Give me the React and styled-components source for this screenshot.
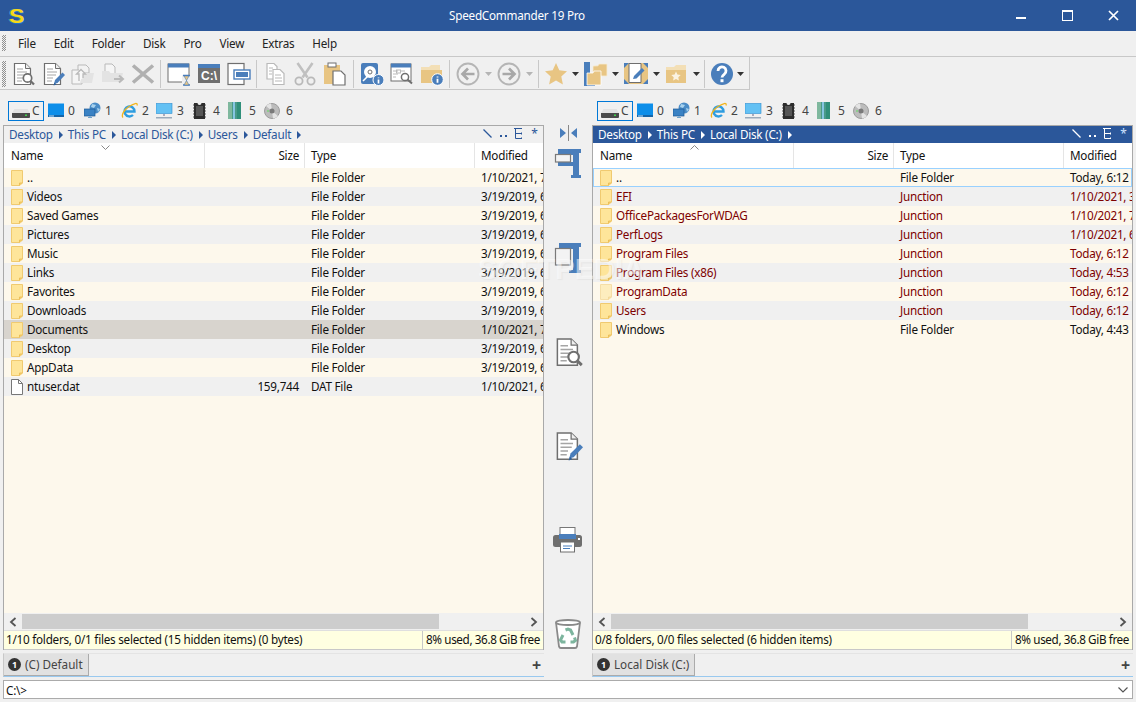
import React from "react";
import styled, { createGlobalStyle } from "styled-components";

const Global = createGlobalStyle`
  html, body { margin: 0; padding: 0; background: #f0f0f0; }
  body { font-family: "Noto Sans", "Open Sans", sans-serif; font-size: 11.7px; letter-spacing: -0.24px; color: #111; overflow: hidden; }
  * { box-sizing: border-box; }
`;

const Window = styled.div`
  width: 1136px; height: 702px; display: flex; flex-direction: column; background: #f0f0f0; position: relative; overflow: hidden;
`;
const TitleBar = styled.div`
  height: 31px; flex: none; background: #2b579a; color: #fff; display: flex; align-items: center; position: relative;
`;
const AppLogo = styled.span`
  font-family: "Liberation Sans", sans-serif; font-weight: 700; font-size: 21px; color: #f7d917; margin-left: 9px; line-height: 24px;
  transform: scaleX(1.1); transform-origin: left center;
  text-shadow: 1px 1px 0 #1b73c9, -1px 0 0 #4a94d8;
`;
const TitleText = styled.span`
  position: absolute; left: 0; width: 1034px; text-align: center; top: 7px; line-height: 17px;
`;
const WinControls = styled.div`
  margin-left: auto; display: flex;
`;
const WinBtn = styled.div`
  width: 46px; height: 31px; display: flex; align-items: center; justify-content: center;
`;
const Grip = styled.div`
  width: 4px; margin: 0 0 0 2px; flex: none; height: ${p => p.$h}px;
  background: repeating-conic-gradient(#8f8f8f 0 25%, transparent 0 50%) 0 0 / 2px 2px;
`;
const MenuBar = styled.div`
  height: 26px; flex: none; display: flex; align-items: center; border-bottom: 1px solid #c8c8c8; padding: 3px 0 4px;
`;
const MenuItem = styled.span`
  margin-left: ${p => p.$ml}px; color: #222;
`;
const ToolbarRow = styled.div`
  height: 33px; flex: none; display: flex; width: 750px; border: 1px solid #c8c8c8; border-width: 0 1px 1px 0; align-items: center; padding: 4px 0 2px;
`;
const Tools = styled.div`
  display: flex; align-items: center; margin-left: 1.5px; height: 28px;
`;
const ToolBtn = styled.div`
  width: ${p => p.$w}px; height: 28px; display: flex; align-items: center; justify-content: center; flex: none;
`;
const ToolSep = styled.div`
  width: ${p => p.$w}px; height: 28px; flex: none; display: flex; justify-content: center;
  &::after { content: ""; width: 1px; height: 100%; background: #c8c8c8; }
`;
const Main = styled.div`
  flex: 1; display: flex; padding: 0 3px; min-height: 0;
`;
const Pane = styled.div`
  width: 541px; flex: none; display: flex; flex-direction: column;
`;
const DriveBar = styled.div`
  height: 35px; flex: none; display: flex; align-items: center; padding: 6px 0 0 5px;
`;
const DriveItem = styled.div`
  display: flex; align-items: center; height: 20px; width: ${p => p.$w}px; flex: none;
  ${p => p.$active && "border: 1px solid #0078d7; padding-left: 3px; margin-right: 2px;"}
  ${p => !p.$active && "padding-left: 2px;"}
  span { color: #444; font-size: 12px; margin-left: ${p => p.$gap ?? 4}px; }
`;
const Frame = styled.div`
  width: 541px; height: 525px; flex: none; border: 1px solid #a9a9a9; border-bottom: 0; display: flex; flex-direction: column; background: #fff;
`;
const PathBar = styled.div`
  height: 17px; flex: none; display: flex; align-items: center; padding: 0 0 2px 5px;
  background: ${p => p.$active ? "#2b579a" : "#f0f0f0"};
  color: ${p => p.$active ? "#fff" : "#2b579a"};
`;
const Crumb = styled.span`
  display: flex; align-items: center; margin-right: 5px;
  &::after { content: ""; border-left: 4px solid currentColor; border-top: 4px solid transparent; border-bottom: 4px solid transparent; margin-left: 6px; margin-top: 2px; }
`;
const PathTools = styled.div`
  margin-left: auto; display: flex; align-items: center;
`;
const ColHead = styled.div`
  height: 25px; flex: none; display: flex; background: #fff; position: relative;
`;
const HeadCell = styled.div`
  width: ${p => p.$w}px; flex: ${p => p.$w ? "none" : 1}; padding: 4px 5px 0 6px; line-height: 16px;
  text-align: ${p => p.$right ? "right" : "left"}; overflow: hidden; white-space: nowrap;
  border-right: ${p => p.$w ? "1px solid #e5e5e5" : "0"};
  &:first-of-type { padding-left: 7px; }
`;
const SortMark = styled.svg`
  position: absolute; left: 97px; top: 2px;
`;
const ListArea = styled.div`
  flex: 1; background: #fdf8ec; min-height: 0; overflow: hidden;
`;
const Row = styled.div`
  height: 19px; display: flex; align-items: center; white-space: nowrap; overflow: hidden; line-height: 17px;
  background: ${p => p.$sel ? "#d8d4ce" : p.$alt ? "#f0f0f0" : "#fdf8ec"};
  ${p => p.$focus && "outline: 1px solid #99d1ff; outline-offset: -1px;"}
  color: ${p => p.$junction ? "#7d0000" : "#111"};
`;
const NameCell = styled.div`
  width: 201px; flex: none; display: flex; align-items: center; padding-left: 7px; gap: 4px; height: 19px;
`;
const CellText = styled.span`
  display: block; margin-top: -1px;
`;
const SizeCell = styled.div`
  width: 100px; flex: none; text-align: right; padding-right: 6px; margin-top: -1px;
`;
const TypeCell = styled.div`
  width: 170px; flex: none; padding-left: 6px; margin-top: -1px;
`;
const DateCell = styled.div`
  flex: 1; min-width: 0; overflow: hidden; padding-left: 6px; margin-top: -1px;
`;
const ScrollBar = styled.div`
  height: 17px; flex: none; background: #f0f0f0; display: flex; align-items: center;
`;
const ScrollArrow = styled.div`
  width: 18px; height: 17px; flex: none; display: flex; align-items: center; justify-content: center;
`;
const ScrollThumb = styled.div`
  width: 417px; height: 15px; background: #cdcdcd; flex: none;
`;
const ScrollTrack = styled.div`
  flex: 1;
`;
const StatusBar = styled.div`
  height: 20px; flex: none; display: flex; background: #ffffe1; border-bottom: 1px solid #c8c8c8; border-top: 1px solid #dfdfdf;
  line-height: 17px;
`;
const StatusLeft = styled.div`
  width: 419px; flex: none; padding-left: 2px; white-space: nowrap; overflow: hidden; border-right: 1px solid #c8c8c8;
`;
const StatusRight = styled.div`
  flex: 1; padding-left: 3px; white-space: nowrap; overflow: hidden; letter-spacing: -0.38px;
`;
const TabBar = styled.div`
  height: 24px; flex: none; margin: 3px 0; display: flex; border-bottom: 1px solid #99c9ef; border-left: 1px solid #c8c8c8; border-top: 1px solid #e4e4e4;
`;
const Tab = styled.div`
  display: flex; align-items: center; gap: 4px; padding: 0 5px 1px 4px; background: #e1e1e1; border-right: 1px solid #ababab; border-bottom: 1px solid #ababab; color: #444; letter-spacing: 0;
`;
const TabNum = styled.span`
  width: 13px; height: 13px; border-radius: 50%; background: #333; color: #fff; font-size: 9px; font-weight: 700; line-height: 13px; text-align: center; flex: none;
`;
const TabAdd = styled.span`
  margin-left: auto; margin-right: 3px; align-self: center; font-size: 16px; font-weight: 700; color: #444; line-height: 16px;
`;
const Middle = styled.div`
  width: 48px; flex: none; display: flex; flex-direction: column; align-items: center; padding-top: 35px; gap: 62px;
`;
const SwapBtn = styled.div`
  height: 16px; margin-bottom: -55px; display: flex; align-items: center;
`;
const MidBtn = styled.div`
  height: 32px; width: 32px; display: flex; align-items: center; justify-content: center;
`;
const CmdLine = styled.div`
  height: 19px; flex: none; margin: 0 3px 3px; border: 1px solid #ababab; background: #fff; display: flex; align-items: center; padding: 0 4px 0 2px; line-height: 16px;
`;
const Watermark = styled.div`
  position: absolute; left: 478px; top: 253px; font-family: "Liberation Sans", sans-serif; font-size: 29px; font-weight: 700;
  letter-spacing: 0; color: rgba(255,255,255,0.5); text-shadow: 1px 1px 1px rgba(150,150,150,0.1); pointer-events: none; white-space: nowrap;
`;

const G = "#6f6f6f", B = "#4a7ebb", T = "#e8c583", L = "#b9b9b9";

const DocBase = ({ c = G }) => (<>
  <path d="M3.500 1.500h11l5 5v16h-16z" fill="#fff" stroke={c} strokeWidth="1.200"/>
  <path d="M14.500 1.500v5h5" fill="#eee" stroke={c} strokeWidth="1"/>
  <path d="M6 7h6M6 10h10M6 13h9M6 16h6M6 19h5" stroke="#a5a5a5" strokeWidth="1.100"/>
</>);
const DocSearch = ({ s = 24 }) => (<svg width={s} height={s} viewBox="0 0 24 24"><DocBase/><circle cx="16.500" cy="16" r="4.200" fill="#fff" stroke={G} strokeWidth="1.700"/><path d="M19.500 19l3.500 3.500" stroke={G} strokeWidth="2.300"/></svg>);
const DocEdit = ({ s = 24 }) => (<svg width={s} height={s} viewBox="0 0 24 24"><DocBase/><path d="M13 22l1-4L21.500 10.500l2.500 2.500L16.500 21z" fill={B}/><path d="M12.500 23.500l1-3 2 2z" fill="#2f5f99"/></svg>);
const CopyFaded = () => (<svg width="24" height="24" viewBox="0 0 24 24"><path d="M7 3h8l3 3v5H7z" fill="#f2f2f2" stroke={L}/><path d="M1 8h7l3 3v11H1z" fill="#f5f5f5" stroke={L}/><path d="M12 11h11l-2 10H9z" fill="#e3e3e3"/><path d="M8 19v-7H5.500L10 7.500l4.500 4.500H12v4" fill="#f8f8f8" stroke={L} strokeWidth="1.300"/></svg>);
const MoveFaded = () => (<svg width="24" height="24" viewBox="0 0 24 24"><path d="M4 2h7l3 3v8H4z" fill="#f5f5f5" stroke={L}/><path d="M1 9h7l1.500 2H22l-2 9H1z" fill="#e3e3e3"/><path d="M13 17h8M18 13.500l4 3.500-4 3.500" fill="none" stroke={L} strokeWidth="2"/></svg>);
const XIcon = () => (<svg width="24" height="24" viewBox="0 0 24 24"><path d="M2 3.500l20 17M22 3.500l-20 17" stroke="#b0b0b0" strokeWidth="3.600"/></svg>);
const WinHour = () => (<svg width="24" height="24" viewBox="0 0 24 24"><rect x="1" y="2" width="21" height="18" fill="#fff" stroke={G}/><rect x="1" y="1.500" width="21" height="4" fill={B}/><rect x="15" y="13" width="9" height="11" fill="#f0f0f0"/><path d="M16 13.500h7M16 23h7" stroke={B} strokeWidth="1.600"/><path d="M17 14l2.500 4.500L17 23h5l-2.500-4.500L22 14z" fill="#e8c583" stroke={B} strokeWidth=".6"/></svg>);
const ConsoleText = styled.text`
  font-family: "Liberation Sans", sans-serif; font-size: 12px; font-weight: 700; fill: #fff; letter-spacing: 0;
`;
const Console = () => (<svg width="24" height="24" viewBox="0 0 24 24"><rect x="1" y="2" width="22" height="19" fill="#6f6f6f"/><rect x="1" y="2" width="22" height="4" fill={B}/><ConsoleText x="4" y="18">C:\</ConsoleText></svg>);
const Restore = () => (<svg width="24" height="24" viewBox="0 0 24 24"><rect x="1" y="1.500" width="16" height="21" fill="#fff" stroke={G} strokeWidth="1.200"/><rect x="7" y="8" width="16" height="9" fill="#fff" stroke={B} strokeWidth="1.400"/><rect x="9" y="10" width="12" height="5" fill={B}/></svg>);
const CopyFiles = () => (<svg width="24" height="24" viewBox="0 0 24 24"><path d="M4 1.500h7l3 3V17H4z" fill="#fff" stroke={L} strokeWidth="1.200"/><path d="M10 7.500h7l4 4v11H10z" fill="#fff" stroke={L} strokeWidth="1.200"/><path d="M12 13h6M12 16h7M12 19h7M6 6h4M6 9h3M6 12h3" stroke={L}/></svg>);
const Scissors = () => (<svg width="24" height="24" viewBox="0 0 24 24"><circle cx="6" cy="19" r="3.600" fill="none" stroke={L} strokeWidth="1.800"/><circle cx="18" cy="19" r="3.600" fill="none" stroke={L} strokeWidth="1.800"/><path d="M4.500 1L14.500 15.500M19.500 1L9.500 15.500" stroke="#c0c0c0" strokeWidth="2.600"/></svg>);
const Paste = () => (<svg width="24" height="24" viewBox="0 0 24 24"><rect x="1" y="3" width="16" height="19" fill={T}/><rect x="5" y="1" width="8" height="4" fill="#fff" stroke={G}/><path d="M10 9h8l4 4v10H10z" fill="#fff" stroke={G} strokeWidth="1.200"/></svg>);
const DiskInfo = () => (<svg width="24" height="24" viewBox="0 0 24 24"><rect x="1" y="1" width="17" height="21" rx="2" fill={B}/><circle cx="10" cy="10" r="6" fill="#fff"/><circle cx="10" cy="10" r="2" fill="none" stroke={G}/><path d="M3 19l5-5" stroke="#fff" strokeWidth="1.600"/><circle cx="18.500" cy="18" r="5.500" fill={B} stroke="#fff"/><path d="M18.500 15.500v.8M18.500 17.500v4" stroke="#fff" strokeWidth="1.700"/></svg>);
const ViewSearch = () => (<svg width="24" height="24" viewBox="0 0 24 24"><rect x="1" y="2" width="20" height="17" fill="#fff" stroke={G}/><rect x="1" y="1.500" width="20" height="4" fill={B}/><path d="M3 9h5M3 12h5M3 15h3M10 9h5" stroke={L}/><rect x="6.500" y="8" width="4" height="3" fill="none" stroke={L}/><circle cx="15" cy="15" r="3.600" fill="#fff" stroke={G} strokeWidth="1.500"/><path d="M17.500 17.500l4.500 4" stroke={G} strokeWidth="2"/></svg>);
const FolderInfo = () => (<svg width="24" height="24" viewBox="0 0 24 24"><path d="M1 5h8l2-2h9v5H1z" fill="#f3dfb6"/><path d="M1 8h21v13H1z" fill={T}/><circle cx="17.500" cy="17.500" r="5.800" fill={B} stroke="#fff"/><path d="M17.500 14.500v1M17.500 16.800v4" stroke="#fff" strokeWidth="1.800"/></svg>);
const NavArrow = ({ dir }) => (<svg width="24" height="24" viewBox="0 0 24 24"><circle cx="12" cy="12" r="10.500" fill="none" stroke="#b5b5b5" strokeWidth="1.900"/><path d={dir === "l" ? "M18.500 12H7M12 6.500L6.500 12l5.500 5.500" : "M5.500 12H17M12 6.500l5.500 5.500-5.500 5.500"} fill="none" stroke="#a8a8a8" strokeWidth="2.700"/></svg>);
const DD = ({ c = "#333" }) => (<svg width="7" height="4" viewBox="0 0 7 4"><path d="M0 0h7L3.500 4z" fill={c}/></svg>);
const Star = () => (<svg width="24" height="24" viewBox="0 0 24 24"><path d="M12 1l3.300 7.300 7.700.9-5.700 5.300 1.600 7.900L12 18.400l-6.900 4 1.600-7.900L1 9.200l7.700-.9z" fill={T}/></svg>);
const Folders = () => (<svg width="24" height="24" viewBox="0 0 24 24"><rect x="0" y="0" width="6" height="24" fill={B}/><rect x="6" y="21" width="5" height="3" fill={B}/><path d="M9 4l5-.2 1-1.800h8v12H9z" fill={T} stroke="#f6ecd6" strokeWidth=".8"/><path d="M3 11h6l1-2h7v14H3z" fill={T} stroke="#fff" strokeWidth=".8"/></svg>);
const EditBox = () => (<svg width="24" height="24" viewBox="0 0 24 24"><rect x="0" y="1" width="24" height="21" fill={B}/><path d="M0 6l5-5h14l5 5v11l-5 5H5l-5-5z" fill={T}/><path d="M5 1.500h12v19H5z" fill="#fff" stroke={G}/><path d="M9 17l1-3 8-8 2.500 2.500-8 8z" fill={B}/></svg>);
const FavFolder = () => (<svg width="22" height="22" viewBox="0 0 22 22"><path d="M1 4h8l2-2h10v5H1z" fill="#f3dfb6"/><rect x="1" y="7" width="20" height="13" fill={T}/><path d="M11 8.500l1.400 3 3.300.4-2.400 2.300.6 3.300-2.900-1.600-2.900 1.600.6-3.300-2.400-2.300 3.300-.4z" fill="#fbf3e2"/></svg>);
const Help = () => (<svg width="24" height="24" viewBox="0 0 24 24"><circle cx="12" cy="12" r="11" fill={B}/><path d="M8 9a4 4 0 1 1 6.300 3.200c-1.400 1-2.300 1.600-2.300 3.300" fill="none" stroke="#fff" strokeWidth="2.800"/><rect x="10.500" y="17.200" width="3" height="3" fill="#fff"/></svg>);

const Folder = ({ faded }) => (<svg width="12" height="16" viewBox="0 0 12 16" style={{ opacity: faded ? 0.55 : 1, flex: "none" }}><path d="M.5.500h11v12.500l-3 2.500h-8z" fill="#fee59a" stroke="#f0ca70"/><path d="M8.500 15.500v-2.500h3" fill="#f6cf71" stroke="#eab94f" strokeWidth=".8"/></svg>);
const FileIcon = () => (<svg width="12" height="16" viewBox="0 0 12 16" style={{ flex: "none" }}><path d="M.5.500h7l4 4v11H.5z" fill="#fff" stroke="#777"/><path d="M7.500.5v4h4" fill="none" stroke="#777"/></svg>);

const DriveHdd = () => (<svg width="18" height="9" viewBox="0 0 18 9" style={{ marginTop: 5 }}><path d="M2.500 0h13L18 4H0z" fill="#e2e2e2"/><path d="M0 4h18v4a1 1 0 0 1-1 1H1a1 1 0 0 1-1-1z" fill="#4a4a4a"/><rect x="13" y="5.500" width="2" height="1.500" fill="#3fd34a"/></svg>);
const D0 = () => (<svg width="16" height="15" viewBox="0 0 16 15"><rect y=".5" width="16" height="12" fill="#0d8ee9"/><rect y="12" width="16" height="2" fill="#1565a8"/><rect x="1" y="12.500" width="5" height="1" fill="#bfe4ff"/></svg>);
const D1 = () => (<svg width="17" height="17" viewBox="0 0 17 17"><circle cx="11" cy="6" r="5.500" fill="#4a8cc7"/><path d="M8 2l4 1-2 3-3-1zM13 6l3 1-2 3z" fill="#a8d2ee"/><rect x="0" y="7" width="11" height="7" fill="#3a82c4" stroke="#1d5a96" strokeWidth=".7"/><path d="M4 15.500h4M6 14v1.500" stroke="#6fa3cc"/></svg>);
const D2 = () => (<svg width="17" height="17" viewBox="0 0 17 17"><path d="M4 9.500h9.500A5 5 0 1 0 12 13" fill="none" stroke="#2e9de0" strokeWidth="2.400"/><path d="M2 15.500c-2-2 1-8 6-11s9-4.500 8-1" fill="none" stroke="#f2b41c" strokeWidth="1.300"/></svg>);
const D3 = () => (<svg width="17" height="16" viewBox="0 0 17 16"><rect y=".5" width="16" height="10" fill="#63c1f4" stroke="#2d8cd0" strokeWidth=".6"/><path d="M7 11h2v2H7z" fill="#aab"/><rect y="14" width="16" height="1.500" fill="#9ab"/></svg>);
const D4 = () => (<svg width="13" height="16" viewBox="0 0 13 16"><path d="M1 0h3.500a2 2 0 0 0 4 0H12v16H1z" fill="#2d2d2d"/><path d="M0 2h13M0 5h13M0 8h13M0 11h13M0 14h13" stroke="#555" strokeDasharray="1 11" strokeWidth="1"/><rect x="3" y="3" width="7" height="10" fill="#555"/></svg>);
const D5 = () => (<svg width="13" height="17" viewBox="0 0 13 17"><rect width="13" height="17" fill="#7fb89e"/><rect x="4" y="0" width="5" height="17" fill="#4a9a8a"/><rect x="9" width="4" height="17" fill="#2f8f7a"/><rect x="5" width="2" height="17" fill="#86c5e2"/></svg>);
const D6 = () => (<svg width="16" height="16" viewBox="0 0 16 16"><circle cx="8" cy="8" r="7.500" fill="#bcbcbc"/><circle cx="8" cy="8" r="7.500" fill="none" stroke="#9c9c9c"/><path d="M8 8L2 3a8 8 0 0 1 5-2.500zM8 8l6 5a8 8 0 0 1-5 2.500z" fill="#e4e4e4"/><circle cx="8" cy="8" r="2.500" fill="#7a7a7a"/><circle cx="4" cy="8" r="1" fill="#7fd27f"/></svg>);

const ClampH = () => (<svg width="30" height="30" viewBox="0 0 30 30"><path d="M5 0h23v4h-2v22h2v3H18v-3h2V17H5v-4h15V6H5z" fill={B}/><rect x="2.500" y="5.500" width="15" height="7.500" fill="#f3f3f3" stroke="#7a7a7a" strokeWidth="1.200"/></svg>);
const ClampV = () => (<svg width="30" height="30" viewBox="0 0 30 30"><path d="M6 0h22v4h-2v23h2v3H16v-3h4V6H6z" fill={B}/><rect x="2.500" y="5.500" width="15" height="16.500" fill="#f3f3f3" stroke="#7a7a7a" strokeWidth="1.200"/></svg>);
const Printer = () => (<svg width="30" height="26" viewBox="0 0 30 26"><rect x="7" y="0.500" width="15" height="8" fill="#fff" stroke="#777"/><rect y="8" width="29" height="12" rx="2.500" fill="#6f6f6f"/><rect x="6" y="7" width="17" height="5" fill={B}/><rect x="25" y="11" width="2" height="2" fill="#fff"/><rect x="7.500" y="15" width="14" height="10" fill="#fff" stroke="#6f6f6f"/><path d="M10 19h9M10 21.500h7" stroke={B} strokeWidth="1.200"/></svg>);
const Trash = () => (<svg width="28" height="30" viewBox="0 0 28 30"><path d="M2 3.500l3 24a2 2 0 0 0 2 1.500h14a2 2 0 0 0 2-1.500l3-24" fill="#fff" stroke="#8a8a8a" strokeWidth="1.800"/><ellipse cx="14" cy="3.500" rx="12" ry="2.500" fill="#fff" stroke="#8a8a8a" strokeWidth="1.800"/><path d="M11.500 11L14 10l2.500 1 2.500 5M20.500 18.500l1 3-2 1.500h-3M11.500 23H8l-1.500-2 2.500-5" fill="none" stroke="#7db59e" strokeWidth="3"/></svg>);

const Slash = ({ c }) => (<svg width="9" height="9" viewBox="0 0 9 9"><path d="M.5.500l8 8" stroke={c} strokeWidth="1.200"/></svg>);
const Dots = ({ c }) => (<svg width="8" height="9" viewBox="0 0 8 9"><rect x="0" y="6" width="2" height="2" fill={c}/><rect x="5" y="6" width="2" height="2" fill={c}/></svg>);
const TreeI = ({ c }) => (<svg width="9" height="11" viewBox="0 0 9 11"><path d="M1.500 0v10.500h6M1.500 5.500h6M0 .5h8M7.500 4.500v2M7.500 9.500v1.500" fill="none" stroke={c}/></svg>);
const PathTool = styled.span`
  display: flex; width: ${p => p.$w}px; justify-content: center; align-items: center;
`;
const Asterisk = styled.span`
  font-size: 12px; line-height: 12px; color: ${p => p.$c};
`;

const tools = [
  ["b", 30, <DocSearch/>], ["b", 30, <DocEdit/>], ["b", 30, <CopyFaded/>], ["b", 30, <MoveFaded/>], ["b", 30, <XIcon/>],
  ["s", 6],
  ["b", 30, <WinHour/>], ["b", 30, <Console/>], ["b", 30, <Restore/>],
  ["s", 6],
  ["b", 30, <CopyFiles/>], ["b", 30, <Scissors/>], ["b", 30, <Paste/>],
  ["s", 7],
  ["b", 30, <DiskInfo/>], ["b", 30, <ViewSearch/>], ["b", 30, <FolderInfo/>],
  ["s", 6],
  ["b", 30, <NavArrow dir="l"/>], ["b", 11, <DD c="#b5b5b5"/>], ["b", 30, <NavArrow dir="r"/>], ["b", 11, <DD c="#b5b5b5"/>],
  ["s", 7],
  ["b", 28, <Star/>], ["b", 12, <DD/>], ["b", 28, <Folders/>], ["b", 12, <DD/>], ["b", 29, <EditBox/>], ["b", 11, <DD/>], ["b", 29, <FavFolder/>], ["b", 11, <DD/>],
  ["s", 6],
  ["b", 28, <Help/>], ["b", 10, <DD/>],
];

const drives = [
  [<D0/>, "0", 36, 4], [<D1/>, "1", 37, 4], [<D2/>, "2", 35, 4], [<D3/>, "3", 37, 4], [<D4/>, "4", 35, 7], [<D5/>, "5", 36, 8], [<D6/>, "6", 36, 6],
];

const leftRows = [
  ["..", "", "File Folder", "1/10/2021, 7:44 PM"],
  ["Videos", "", "File Folder", "3/19/2019, 6:52 AM"],
  ["Saved Games", "", "File Folder", "3/19/2019, 6:52 AM"],
  ["Pictures", "", "File Folder", "3/19/2019, 6:52 AM"],
  ["Music", "", "File Folder", "3/19/2019, 6:52 AM"],
  ["Links", "", "File Folder", "3/19/2019, 6:52 AM"],
  ["Favorites", "", "File Folder", "3/19/2019, 6:52 AM"],
  ["Downloads", "", "File Folder", "3/19/2019, 6:52 AM"],
  ["Documents", "", "File Folder", "1/10/2021, 7:44 PM", "sel"],
  ["Desktop", "", "File Folder", "3/19/2019, 6:52 AM"],
  ["AppData", "", "File Folder", "3/19/2019, 6:52 AM"],
  ["ntuser.dat", "159,744", "DAT File", "1/10/2021, 6:12 PM", "file"],
];
const rightRows = [
  ["..", "", "File Folder", "Today, 6:12 PM", "focus"],
  ["EFI", "", "Junction", "1/10/2021, 3:12 PM", "j"],
  ["OfficePackagesForWDAG", "", "Junction", "1/10/2021, 7:44 PM", "j"],
  ["PerfLogs", "", "Junction", "1/10/2021, 6:12 PM", "j"],
  ["Program Files", "", "Junction", "Today, 6:12 PM", "j"],
  ["Program Files (x86)", "", "Junction", "Today, 4:53 PM", "j"],
  ["ProgramData", "", "Junction", "Today, 6:12 PM", "jf"],
  ["Users", "", "Junction", "Today, 6:12 PM", "j"],
  ["Windows", "", "File Folder", "Today, 4:43 PM"],
];

const PanelView = ({ crumbs, active, rows, status, tab, sortUp }) => {
  const ic = active ? "#fff" : "#2b579a";
  return (
    <Pane>
      <DriveBar>
        <DriveItem $active $w={36} $gap={2}><DriveHdd/><span>C</span></DriveItem>
        {drives.map(([icon, n, w, gap]) => (
          <DriveItem key={n} $w={w} $gap={gap}>{icon}<span>{n}</span></DriveItem>
        ))}
      </DriveBar>
      <Frame>
        <PathBar $active={active}>
          {crumbs.map(c => <Crumb key={c}>{c}</Crumb>)}
          <PathTools>
            <PathTool $w={20}><Slash c={ic}/></PathTool>
            <PathTool $w={13}><Dots c={ic}/></PathTool>
            <PathTool $w={16}><TreeI c={ic}/></PathTool>
            <PathTool $w={17}><Asterisk $c={active ? "#cfe3ff" : "#2b579a"}>*</Asterisk></PathTool>
          </PathTools>
        </PathBar>
        <ColHead>
          <SortMark width="9" height="5" viewBox="0 0 9 5"><path d={sortUp ? "M.5 4.500l4-4 4 4" : "M.5.500l4 4 4-4"} fill="none" stroke="#888"/></SortMark>
          <HeadCell $w={201}>Name</HeadCell>
          <HeadCell $w={100} $right>Size</HeadCell>
          <HeadCell $w={170}>Type</HeadCell>
          <HeadCell>Modified</HeadCell>
        </ColHead>
        <ListArea>
          {rows.map(([name, size, type, date, flag], i) => (
            <Row key={name} $alt={i % 2 === 1} $sel={flag === "sel"} $focus={flag === "focus"} $junction={flag === "j" || flag === "jf"}>
              <NameCell>{flag === "file" ? <FileIcon/> : <Folder faded={flag === "jf"}/>}<CellText>{name}</CellText></NameCell>
              <SizeCell>{size}</SizeCell>
              <TypeCell>{type}</TypeCell>
              <DateCell>{date}</DateCell>
            </Row>
          ))}
        </ListArea>
        <ScrollBar>
          <ScrollArrow><svg width="8" height="10" viewBox="0 0 8 10"><path d="M6.500 1L2 5l4.500 4" fill="none" stroke="#555" strokeWidth="1.800"/></svg></ScrollArrow>
          <ScrollThumb/>
          <ScrollTrack/>
          <ScrollArrow><svg width="8" height="10" viewBox="0 0 8 10"><path d="M1.500 1L6 5 1.500 9" fill="none" stroke="#555" strokeWidth="1.800"/></svg></ScrollArrow>
        </ScrollBar>
        <StatusBar>
          <StatusLeft>{status}</StatusLeft>
          <StatusRight>8% used, 36.8 GiB free</StatusRight>
        </StatusBar>
      </Frame>
      <TabBar>
        <Tab><TabNum>1</TabNum>{tab}</Tab>
        <TabAdd>+</TabAdd>
      </TabBar>
    </Pane>
  );
};

export default function App() {
  return (
    <Window>
      <Global/>
      <TitleBar>
        <AppLogo>S</AppLogo>
        <TitleText>SpeedCommander 19 Pro</TitleText>
        <WinControls>
          <WinBtn><svg width="10" height="6" viewBox="0 0 10 6"><rect y="4" width="10" height="2" fill="#fff"/></svg></WinBtn>
          <WinBtn><svg width="11" height="11" viewBox="0 0 11 11"><rect x=".5" y=".5" width="10" height="10" fill="none" stroke="#fff"/><rect width="11" height="2" fill="#fff"/></svg></WinBtn>
          <WinBtn><svg width="11" height="11" viewBox="0 0 11 11"><path d="M1 1l9 9M10 1l-9 9" stroke="#fff" strokeWidth="1.700"/></svg></WinBtn>
        </WinControls>
      </TitleBar>
      <MenuBar>
        <Grip $h={16}/>
        <MenuItem $ml={12}>File</MenuItem>
        <MenuItem $ml={18}>Edit</MenuItem>
        <MenuItem $ml={18}>Folder</MenuItem>
        <MenuItem $ml={18}>Disk</MenuItem>
        <MenuItem $ml={18}>Pro</MenuItem>
        <MenuItem $ml={18}>View</MenuItem>
        <MenuItem $ml={18}>Extras</MenuItem>
        <MenuItem $ml={18}>Help</MenuItem>
      </MenuBar>
      <ToolbarRow>
        <Grip $h={26}/>
        <Tools>
          {tools.map(([k, w, icon], i) => k === "s" ? <ToolSep key={i} $w={w}/> : <ToolBtn key={i} $w={w}>{icon}</ToolBtn>)}
        </Tools>
      </ToolbarRow>
      <Main>
        <PanelView crumbs={["Desktop", "This PC", "Local Disk (C:)", "Users", "Default"]} rows={leftRows}
          status="1/10 folders, 0/1 files selected (15 hidden items) (0 bytes)" tab="(C) Default"/>
        <Middle>
          <SwapBtn><svg width="17" height="16" viewBox="0 0 17 16"><path d="M0 3l6 5-6 5zM17 3l-6 5 6 5z" fill={B}/><path d="M8.500 0v16" stroke="#888"/></svg></SwapBtn>
          <MidBtn><ClampH/></MidBtn>
          <MidBtn><ClampV/></MidBtn>
          <MidBtn><DocSearch s={30}/></MidBtn>
          <MidBtn><DocEdit s={30}/></MidBtn>
          <MidBtn><Printer/></MidBtn>
          <MidBtn><Trash/></MidBtn>
        </Middle>
        <PanelView active sortUp crumbs={["Desktop", "This PC", "Local Disk (C:)"]} rows={rightRows}
          status="0/8 folders, 0/0 files selected (6 hidden items)" tab="Local Disk (C:)"/>
      </Main>
      <CmdLine>
        C:\&gt;
        <svg style={{ marginLeft: "auto" }} width="10" height="6" viewBox="0 0 10 6"><path d="M.5.500l4.500 4.500 4.500-4.500" fill="none" stroke="#555" strokeWidth="1.200"/></svg>
      </CmdLine>
      <Watermark>SOFTPEDIA</Watermark>
    </Window>
  );
}
